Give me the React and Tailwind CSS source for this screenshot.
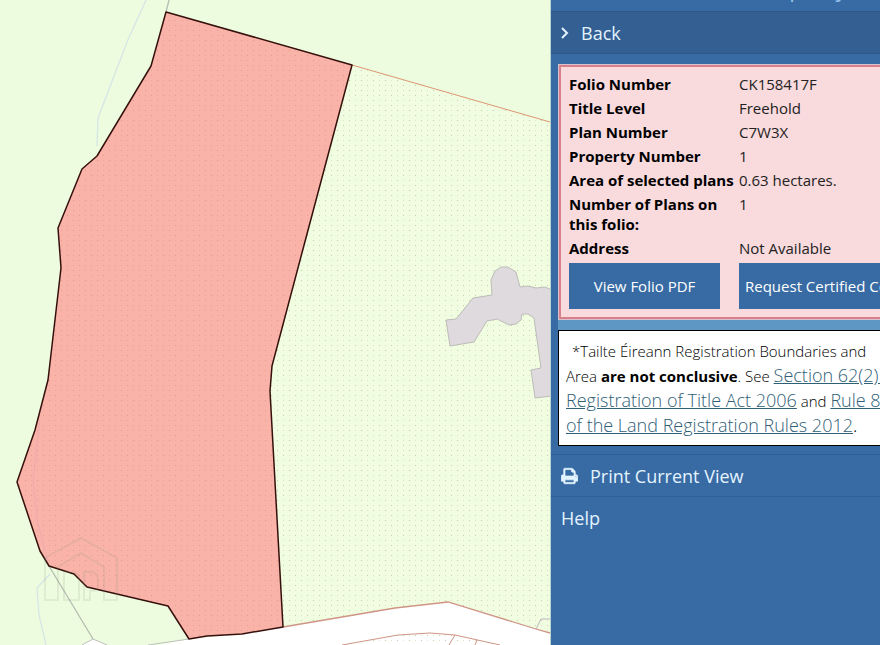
import React from 'react';

const folioRows = [
  { label: 'Folio Number', value: 'CK158417F' },
  { label: 'Title Level', value: 'Freehold' },
  { label: 'Plan Number', value: 'C7W3X' },
  { label: 'Property Number', value: '1' },
  { label: 'Area of selected plans', value: '0.63 hectares.' },
  { label: 'Number of Plans on this folio:', value: '1' },
  { label: 'Address', value: 'Not Available' },
];

const PLAN =
  'M166 12L352 65L303 249L272 366L270 391L283 627L242 634L207 636L189 639L168 606L87 587L74 574L49 566L40 551L17 482L35 430L48 380L61 268L58 228L82 169L97 156L151 66Z';

const ParcelMap = () => (
  <svg
    className="absolute inset-0 h-full w-full"
    viewBox="0 0 550 645"
    preserveAspectRatio="xMinYMin slice"
    role="img"
    aria-label="Map of the selected plan"
  >
    <defs>
      <pattern id="dots" width="12" height="10" patternUnits="userSpaceOnUse">
        <path d="M1 0h1v1h-1zM7 5h1v1h-1z" fill="#c6cca6" />
        <path d="M7 0h1v1h-1zM1 5h1v1h-1z" fill="#dde6c6" />
      </pattern>
      <pattern id="planDots" width="12" height="10" patternUnits="userSpaceOnUse">
        <path d="M1 0h1v1h-1zM7 5h1v1h-1z" fill="#e39a8e" />
        <path d="M7 0h1v1h-1zM1 5h1v1h-1z" fill="#eea79b" />
      </pattern>
    </defs>
    <rect width="550" height="645" fill="#edfcdf" />

    {/* neighbouring plan */}
    <path d="M352 65L550 122V633L448 602L395 608L283 627L270 391L272 366L303 249Z" fill="#f0fde0" />
    <path d="M352 65L550 122V633L448 602L395 608L283 627L270 391L272 366L303 249Z" fill="url(#dots)" />
    <path d="M352 65L550 122" fill="none" stroke="#dc9672" />

    {/* road */}
    <path d="M82 645L93 639L107 645H160L189 639L242 634L283 627L395 608L448 602L550 633V645Z" fill="#fff" />
    <path d="M342 645L398 635L430 633L455 635L500 645Z" fill="url(#dots)" />
    <path d="M283 627L395 608L448 602L536 629L550 633" fill="none" stroke="#cf9484" strokeWidth="1.3" />
    <path d="M342 645L398 635L430 633L455 635L500 645M455 635L449 645M477 640L475 645" fill="none" stroke="#cf9484" />
    <path d="M536 629L541 619H550" fill="none" stroke="#bfb4be" />
    <path d="M148 645L189 639M82 645L93 639L107 645" fill="none" stroke="#bdc2bd" />
    <path d="M49 566L93 639M169 0L166 12" fill="none" stroke="#b5bdb0" strokeWidth="1.3" />

    {/* stream */}
    <path d="M146 0L127 42L98 118L97 146M50 574L37 588L39 615L46 645" fill="none" stroke="#d5e6e6" strokeWidth="1.3" />

    {/* house */}
    <path
      d="M446 320L456 319L473 298L492 295L491 280L495 271L501 267L508 267L516 272L520 287L528 286L536 288L545 287L552 290V396L535 398L531 370L541 368L534 318L528 314L522 314L521 320L516 324L509 325L503 322L497 319L487 321L474 342L450 346Z"
      fill="#dfdadd"
      stroke="#bdbcb8"
    />

    <path d={PLAN} fill="#f9b3a8" />
    <path d={PLAN} fill="url(#planDots)" />
    <path d="M49 566L37 520L33 480L40 420" fill="none" stroke="#f0aaae" />
    <path d={PLAN} fill="none" stroke="#35100c" strokeWidth="1.5" strokeLinejoin="round" />

    {/* watermark */}
    <g fill="none" stroke="#8f9480" strokeOpacity="0.15" strokeWidth="2">
      <path d="M45 600V558L81 538L117 558V600H104V567L81 553L58 567V600Z" />
      <path d="M64 600V572H72Q79 572 79 580V600Z" />
      <path d="M84 600V572H90Q98 572 98 580V587Q98 591 90 591V600Z" />
    </g>
  </svg>
);

const PrintIcon = () => (
  <svg
    className="h-[18px] w-[17px]"
    viewBox="0 0 1664 1792"
    fill="currentColor"
    stroke="currentColor"
    strokeWidth="70"
    aria-hidden="true"
  >
    <path d="M384 1536h896v-256h-896v256zM384 896h896v-384h-160q-40 0-68-28t-28-68v-160h-640v640zM1536 960q0-26-19-45t-45-19-45 19-19 45 19 45 45 19 45-19 19-45zM1664 960v416q0 13-9.5 22.5t-22.5 9.5h-224v160q0 40-28 68t-68 28h-960q-40 0-68-28t-28-68v-160h-224q-13 0-22.5-9.5t-9.5-22.5v-416q0-79 56.5-135.5t135.5-56.5h64v-544q0-40 28-68t68-28h672q40 0 88 20t76 48l152 152q28 28 48 76t20 88v256h64q79 0 135.5 56.5t56.5 135.5z" />
  </svg>
);

const FolioCard = () => (
  <div className="border border-[#d9c0cf]">
    <div className="border-2 border-[#d8818b] bg-[#f9dadd] px-2 pt-[7px] pb-2">
      <table className="w-full table-fixed text-left text-[15px] leading-5 text-black">
        <tbody>
          {folioRows.map((row) => (
            <tr key={row.label} className="align-top">
              <th scope="row" className="w-[170px] pb-1 font-bold">{row.label}</th>
              <td className="pb-1 text-[#222]">{row.value}</td>
            </tr>
          ))}
        </tbody>
      </table>
      <div className="flex pt-px text-[15px] text-white">
        <div className="w-[170px] shrink-0">
          <button type="button" className="h-[46px] w-[151px] bg-[#386ba3]">View Folio PDF</button>
        </div>
        <button type="button" className="h-[46px] shrink-0 bg-[#386ba3] px-[6px] whitespace-nowrap">
          Request Certified Copy
        </button>
      </div>
    </div>
  </div>
);

const Disclaimer = () => (
  <p className="border border-black bg-white px-[7px] py-[7px] text-lg leading-[25px] font-light whitespace-nowrap text-black">
    <span className="pl-[6px] text-[15px] leading-none">*Tailte Éireann Registration Boundaries and</span>
    <br />
    <span className="text-[15px] leading-none">
      Area <b className="font-bold">are not conclusive</b>. See{' '}
    </span>
    <a href="#section62" className="text-[#2f6077] underline">
      Section 62(2) of the
      <br />
      Registration of Title Act 2006
    </a>
    <span className="text-[15px] leading-none"> and </span>
    <a href="#rule8" className="text-[#2f6077] underline">
      Rule 8
      <br />
      of the Land Registration Rules 2012
    </a>
    .
  </p>
);

const App = () => {
  return (
    <div className="flex h-screen overflow-hidden font-['Open_Sans',sans-serif]">
      <main className="relative w-5/8 shrink-0 overflow-hidden">
        <ParcelMap />
      </main>

      <aside className="min-w-0 flex-1 overflow-hidden border-l border-[#b9d3d0] bg-[#386ba3] text-[#e3f3ff]">
        <div className="w-[366px]">
          <header className="flex h-3 items-end justify-center overflow-hidden border-b border-[#2c5888] pb-2">
            <h2 className="mb-2 pl-[130px] text-2xl leading-4 text-[#8fbfe8]">Property</h2>
          </header>

          <button type="button" className="flex h-[42px] w-full items-center gap-3 border-b border-[#2c5888] bg-[#335f92] px-[10px] text-lg">
            <svg className="h-3 w-2" viewBox="0 0 8 12" fill="none" stroke="currentColor" strokeWidth="2" aria-hidden="true">
              <path d="M1 1L6 6L1 11" />
            </svg>
            Back
          </button>

          <div className="px-[7px] pt-[10px] pb-2">
            <FolioCard />
            <div className="h-[10px] bg-[#5f97c4]" />
            <Disclaimer />
          </div>

          <button type="button" className="flex h-[43px] w-full items-center gap-3 border-y border-[#2f5f94] px-[10px] text-lg">
            <PrintIcon />
            Print Current View
          </button>
          <a href="#help" className="flex h-[42px] items-center px-[10px] text-lg">Help</a>
        </div>
      </aside>
    </div>
  );
};

export default App;
